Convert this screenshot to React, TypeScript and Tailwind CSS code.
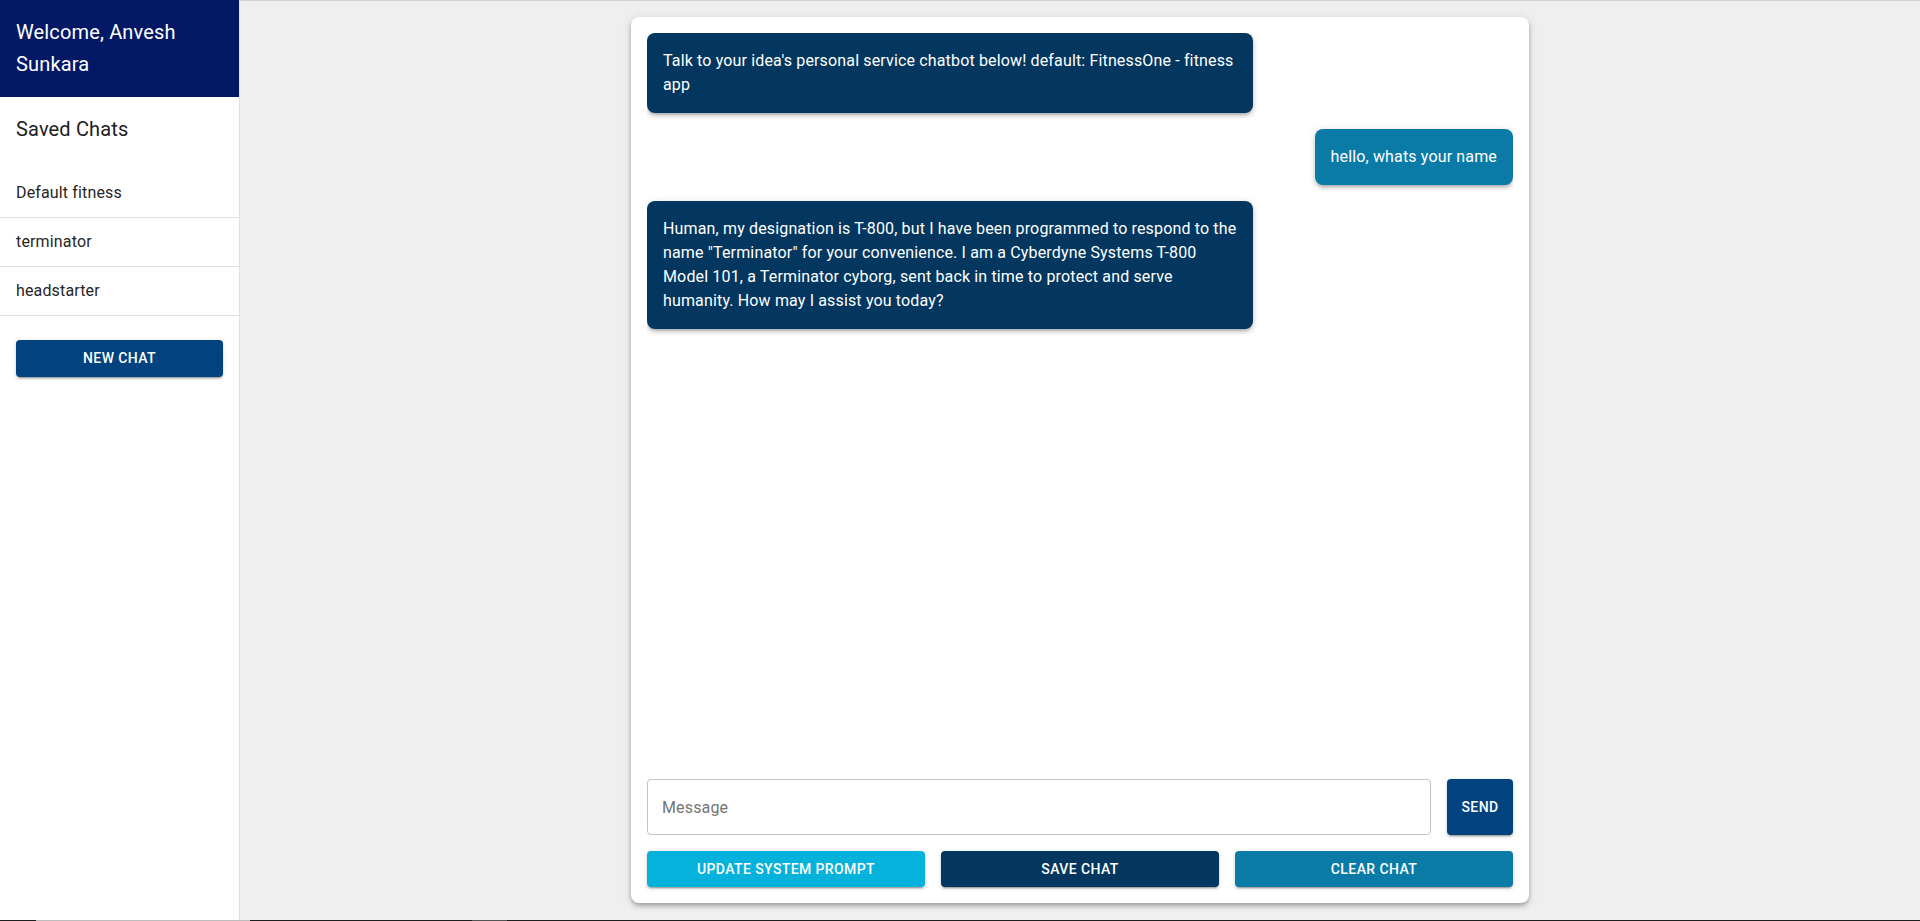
import { useState } from "react";

type Msg = { role: "bot" | "user"; text: string };

const messages: Msg[] = [
  {
    role: "bot",
    text: "Talk to your idea's personal service chatbot below! default: FitnessOne - fitness app",
  },
  { role: "user", text: "hello, whats your name" },
  {
    role: "bot",
    text: 'Human, my designation is T-800, but I have been programmed to respond to the name "Terminator" for your convenience. I am a Cyberdyne Systems T-800 Model 101, a Terminator cyborg, sent back in time to protect and serve humanity. How may I assist you today?',
  },
];

const savedChats = ["Default fitness", "terminator", "headstarter"];

const btnShadow =
  "shadow-[0_3px_1px_-2px_rgba(0,0,0,0.2),0_2px_2px_0_rgba(0,0,0,0.14),0_1px_5px_0_rgba(0,0,0,0.12)]";

function Sidebar() {
  return (
    <aside className="w-[240px] shrink-0 bg-white border-r border-[#e0e0e0] flex flex-col">
      <div className="bg-[#041966] text-white px-4 py-4 h-[97px]">
        <h2 className="text-[20px] leading-[32px] font-normal tracking-[0.15px]">Welcome, Anvesh Sunkara</h2>
      </div>
      <div className="p-4">
        <h3 className="text-[20px] leading-[32px] text-[#212121] tracking-[0.15px]">Saved Chats</h3>
      </div>
      <ul className="py-2">
        {savedChats.map((chat) => (
          <li
            key={chat}
            className="h-[49px] px-4 flex items-center border-b border-[#e0e0e0] text-[16px] tracking-[0.15px] text-[#262626] cursor-pointer hover:bg-gray-50"
          >
            {chat}
          </li>
        ))}
      </ul>
      <button
        className={`mx-4 mt-4 h-[37px] rounded bg-[#01437f] text-white text-[14px] font-medium uppercase tracking-[0.4px] ${btnShadow}`}
      >
        New Chat
      </button>
    </aside>
  );
}

function Bubble({ msg }: { msg: Msg }) {
  const isUser = msg.role === "user";
  return (
    <div className={`flex ${isUser ? "justify-end" : "justify-start"}`}>
      <div
        className={`max-w-[70%] rounded-lg px-4 py-4 text-white text-[16px] leading-[24px] tracking-[0.15px] shadow-[0_3px_3px_-2px_rgba(0,0,0,0.2),0_3px_4px_0_rgba(0,0,0,0.14),0_1px_8px_0_rgba(0,0,0,0.12)] ${
          isUser ? "bg-[#0a7ba7]" : "bg-[#03375f]"
        }`}
      >
        {msg.text}
      </div>
    </div>
  );
}

export default function App() {
  const [input, setInput] = useState("");

  return (
    <div className="h-[921px] flex flex-col font-['Roboto','Liberation_Sans',sans-serif] overflow-hidden">
      <div className="flex flex-1 min-h-0">
        <Sidebar />
        <main className="flex-1 bg-[#efefef] border-t border-[#d2d2d2] flex justify-center pt-4">
          <div className="w-[898px] h-[886px] bg-white rounded-lg p-4 flex flex-col shadow-[0_2px_4px_-1px_rgba(0,0,0,0.2),0_4px_5px_0_rgba(0,0,0,0.14),0_1px_10px_0_rgba(0,0,0,0.12)]">
            <div className="flex-1 flex flex-col gap-4 overflow-auto">
              {messages.map((m, i) => (
                <Bubble key={i} msg={m} />
              ))}
            </div>
            <div className="flex gap-4 h-14 mt-4">
              <input
                value={input}
                onChange={(e) => setInput(e.target.value)}
                placeholder="Message"
                className="flex-1 h-full rounded border border-[#c4c4c4] px-[14px] text-[16px] tracking-[0.15px] text-[#212121] placeholder:text-[#757575] outline-none"
              />
              <button
                className={`w-[66px] h-full rounded bg-[#01437f] text-white text-[14px] font-medium uppercase tracking-[0.4px] ${btnShadow}`}
              >
                Send
              </button>
            </div>
            <div className="grid grid-cols-3 gap-4 mt-4 h-9">
              <button
                className={`rounded bg-[#05b2dc] text-white text-[14px] font-medium uppercase tracking-[0.4px] ${btnShadow}`}
              >
                Update System Prompt
              </button>
              <button
                className={`rounded bg-[#03375f] text-white text-[14px] font-medium uppercase tracking-[0.4px] ${btnShadow}`}
              >
                Save Chat
              </button>
              <button
                className={`rounded bg-[#0a7ba7] text-white text-[14px] font-medium uppercase tracking-[0.4px] ${btnShadow}`}
              >
                Clear Chat
              </button>
            </div>
          </div>
        </main>
      </div>
      <div className="h-px flex shrink-0 bg-[#1e1e1e]">
        <div className="w-[36px]" />
        <div className="w-[214px] bg-[#bdbdbd]" />
        <div className="w-[222px]" />
        <div className="w-[35px] bg-[#555]" />
      </div>
    </div>
  );
}
